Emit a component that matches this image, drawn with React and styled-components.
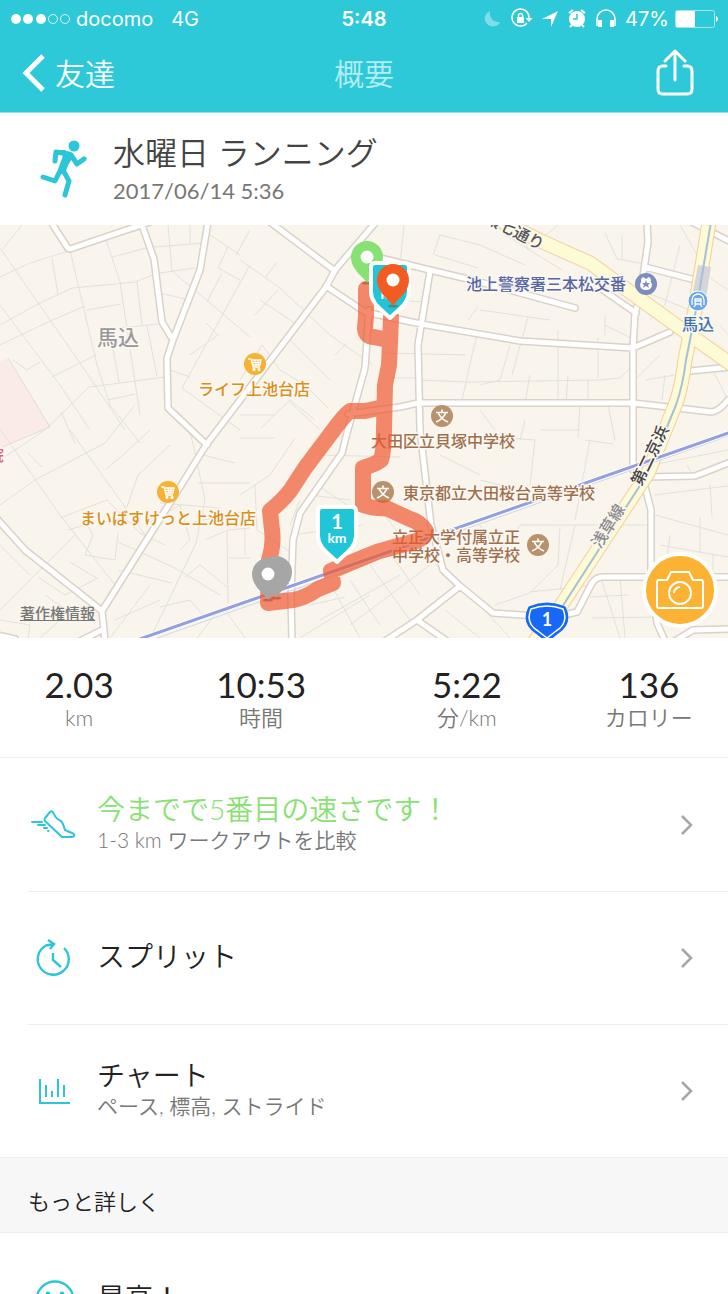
import styled, { createGlobalStyle } from 'styled-components';

const STATS = [
  { value: '2.03', unit: 'km' },
  { value: '10:53', unit: '時間' },
  { value: '5:22', unit: '分/km' },
  { value: '136', unit: 'カロリー' },
];

const SIDE_STREETS = [
  'M0 52L30 38L72 25L145 3M52 33L58 70M3 24L22 0M0 23L80 138L125 205M0 100L36 80L72 63L115 59L135 57L160 47M0 120L48 97L85 81M40 137L27 145L13 135M0 80L60 160L90 205',
  'M70 25L97 140L110 180L140 218M106 15L120 57L128 110L140 190M112 32L154 21M87 85L121 79M52 152L96 130M137 57L142 100M120 103L158 99M147 101L157 151M90 162L165 152M112 118L119 157M108 175L135 169M0 235L45 205L90 161M61 187L75 218',
  'M168 0L172 46L203 72L250 112M154 22L205 18M160 48L195 43M160 68L185 74M190 0V18M228 22L218 43L240 55M222 48L207 77M210 10L240 30M250 40L182 163L240 205M250 5L236 30M206 98L218 110L190 130M170 145L190 152',
  'M0 280L35 255L105 218L135 180M0 204L60 290L115 360M28 228L42 242M70 205L100 247L145 310M60 293L107 275L140 308L165 320M105 245L123 230L150 205M68 305L85 300M85 295L93 310L85 330L115 335L118 308M118 317L175 343L220 370',
  'M0 320L30 350M0 385L75 310M38 352L65 370L98 353M98 354L70 337M45 370L62 382M0 395L30 400L28 413M160 278L220 283M118 345L172 358M127 282L138 250L170 220M145 300L180 280L190 315L180 325',
  'M190 205L205 275L196 318L152 410M198 258H250M203 230L235 238M180 300L250 285M205 315L228 305L250 303M227 305L228 378M245 300V330M229 333H250M160 382L190 375L205 392M185 352L200 340L227 362',
  'M240 35L280 63L330 110L373 140M265 53L277 37M278 65L255 90M260 75L298 100M290 115L330 155M335 130L347 118M240 155L262 120L280 145L305 160L328 183M261 203L290 175L315 195M240 190L275 190M290 177L320 205',
  'M404 0L400 40M435 30L478 43M390 153H420M420 155L466 157L600 155L620 153L633 140M385 128L466 130M477 110L472 130L462 175M433 30L440 10L480 20M395 75L425 77M468 95L478 82M528 92L512 150M558 105V175M598 112V153',
  'M505 10L562 45M520 0L528 25L558 0M605 8L617 34L650 40M622 35V10M680 20L665 80L650 95M640 65L690 85M680 0L710 53L728 65M480 85L550 95M605 100L635 115M605 90V110M530 150L525 178M568 150L566 178M588 155V178',
  'M480 20L525 40M510 120L500 155L480 160M480 185L495 205M525 195L520 215M580 180L578 213M585 215L613 219M608 180L615 215M660 130L635 155M665 150L662 175M645 155L675 150M710 140L728 175M720 100L728 110',
  'M510 213L535 215L530 260M590 215L575 295M480 255L500 260M540 205L580 205M440 230L480 250M392 260L375 285M640 262L652 240L728 225M654 270L728 261M710 260L712 292M655 290L728 310M700 292V328M687 240L695 255',
  'M480 300L500 330L520 300L560 300H650M560 302L558 340L530 368L495 380M530 367L595 360M575 300L560 365M600 350L620 413M620 352L625 413M590 372L628 370M660 320L728 332M655 340L728 350M592 393L660 392M670 310L665 350M713 330V360',
  'M275 213H240M295 213L270 250L240 270M255 260L257 305L295 330M318 230L400 232M310 270L350 275M300 275L290 300M292 310L363 300M317 260L355 285M380 285L400 310M333 363L360 413M350 355L380 400M370 340L410 395M390 328L420 370M420 320L445 350',
  'M310 380L345 372M320 395L400 350M300 413L370 370M350 400L430 340M445 385L480 413M480 380L510 413M225 385L245 413M197 413L215 390L250 378M40 413L60 395M115 395L160 375M610 290L590 350M110 413L150 360',
];

const ROADS = [
  'M51 -3L67 22Q69 25 73 23L150 -3',
  'M142 0L154 34L162 97L173 115',
  'M208 -3L200 45L173 115L167 133L168 183L207 220',
  'M376 -3L335 45L326 62L206 220L180 262L102 386L105 416',
  'M-3 294L25 325L102 386M104 404L80 416M-3 410L15 414',
  'M270 -3L335 46',
  'M326 61L365 87L421 99L520 116L633 123L670 107',
  'M380 33L430 45L480 57L575 83',
  'M430 46L418 120L420 205L431 300L443 345L460 361L493 388L535 391',
  'M369 85L365 143L347 208L342 228L300 288L293 315L291 372L292 416',
  'M348 189L400 182L418 178H633L712 187Q719 186 728 175',
  'M647 -3L648 17L640 72L635 88L633 123V245',
  'M645 42L695 55M603 65L636 88',
  'M690 146L731 142M688 -5L731 17',
  'M460 361L417 395L385 416M417 395L447 416',
  'M645 252L695 251L731 237M644 258L651 285V352L657 398L665 416',
  'M555 392L577 387L592 358Q596 352 603 352H731M675 416L693 405L731 404',
];

const HIGHWAYS = [
  'M493 -8L543 17L590 38L680 103L731 139',
  'M709 -3L695 85L685 135Q682 160 676 178L648 248L558 385L535 416',
];

const ROUTE =
  'M366 64L366 90L365 104Q366 112 374 112L388 115M391 92L390 118L389 140L385 160L384 205Q384 226 381 235Q376 239 363 243L363 280Q375 284 386 283L410 294Q420 297 426 306Q424 313 416 316L387 324Q377 326 367 331L331 346L333 358L318 364Q305 373 293 375L268 378L269 335Q274 320 272 305L270 286Q282 276 290 266L305 243L335 203Q343 192 350 186L365 186L384 182';

const Pin = ({ x, y, color }) => (
  <g transform={`translate(${x} ${y})`}>
    <ellipse cx="0" cy="26" rx="5" ry="1.5" fill="#8a3018" opacity="0.4" />
    <path d="M0 26C-3 20 -16 13 -16 0A16 16 0 0 1 16 0C16 13 3 20 0 26Z" fill={color} />
    <circle r="6.5" fill="#fff" />
  </g>
);

const KmTag = ({ x, y, label }) => (
  <g transform={`translate(${x} ${y})`}>
    <path
      d="M-15 -28H15Q19 -28 19 -24V1C19 12 9 18 0 27C-9 18 -19 12 -19 1V-24Q-19 -28 -15 -28Z"
      fill="#20c6d8"
      stroke="#fff"
      strokeWidth="4"
      strokeLinejoin="round"
    />
    <TagText y="-6" $size={20}>{label}</TagText>
    <TagText y="8" $size={14}>km</TagText>
  </g>
);

const CartPoi = ({ x, y }) => (
  <g transform={`translate(${x} ${y})`} fill="none" stroke="#fff" strokeWidth="1.3">
    <circle r="11" fill="#f7b133" stroke="none" />
    <path d="M-7 -5H-4L-2 3H5M-4 -4H6L5 1H-2.5M-3 -1.5H6M0 -4L1 1M3 -4V1" />
    <circle cx="-1" cy="5.5" r="1" fill="#fff" />
    <circle cx="4" cy="5.5" r="1" fill="#fff" />
  </g>
);

const SchoolPoi = ({ x, y }) => (
  <g transform={`translate(${x} ${y})`}>
    <circle r="11" fill="#b8916d" />
    <path d="M0 -6.5V-3.5M-6 -3.5H6M-4 -3.5C-2 1 1 4 6 6M4 -3.5C2 1 -1 4 -6 6" fill="none" stroke="#fff" strokeWidth="1.6" />
  </g>
);

const RouteMap = () => (
  <MapSvg viewBox="0 0 728 413" role="img" aria-label="ルート">
    <rect width="728" height="413" fill="#f9f5ed" />
    <path d="M0 137L8 133L50 202L0 223Z" fill="#fbebe7" />
    <path d="M8 133L50 202L0 223" fill="none" stroke="#e3dcd4" />
    <path d={SIDE_STREETS.join('')} fill="none" stroke="#e3e1da" strokeWidth="1" />

    <g fill="none" strokeLinejoin="round" strokeLinecap="round">
      <path d={ROADS.join('')} stroke="#dad2c8" strokeWidth="8" />
      <path d={ROADS.join('')} stroke="#fff" strokeWidth="5" />
      <path d={HIGHWAYS.join('')} stroke="#f3cf9a" strokeWidth="15" />
      <path d={HIGHWAYS.join('')} stroke="#fdfad6" strokeWidth="13" />
      <path d="M698 40L711 42L704 85L690 83Z" fill="#d6d6d8" />
      <path d="M711 -3L697 80L686 135Q683 160 676 180L648 248L555 393" stroke="#a5c0d8" strokeWidth="2" />
      <path d="M143 418L731 210" stroke="#ccd8ea" strokeWidth="1" />
      <path d="M140 414L731 207" stroke="#fff" strokeWidth="5" />
      <path d="M140 414L731 207" stroke="#949fdd" strokeWidth="3" />
    </g>

    <CartPoi x={255} y={139} />
    <CartPoi x={168} y={267} />
    <SchoolPoi x={442} y={191} />
    <SchoolPoi x={383} y={267} />
    <SchoolPoi x={538} y={320} />
    <circle cx="646" cy="59" r="11" fill="#7d8dbd" />
    <path d="M641 54L643 52L646 54L649 52L651 54Q650 57 652 59Q652 65 646 65Q640 65 640 59Q642 57 641 54Z" fill="#fff" />
    <path d="M646 55L647 58H650L648 60L649 63L646 61L643 63L644 60L642 58H645Z" fill="#7d8dbd" />
    <circle cx="698" cy="76" r="10" fill="#6aa6e8" stroke="#fff" />
    <path d="M692 80V75A6 6 0 0 1 704 75V80M695 74V79H701V74ZM695 76H701M696 79L694 82M700 79L702 82" fill="none" stroke="#fff" strokeWidth="1.3" />

    <Label x="546" y="65" $color="#5566a5">池上警察署三本松交番</Label>
    <Label x="698" y="105" $color="#4272ad">馬込</Label>
    <Label x="118" y="120" $color="#999" $size={21}>馬込</Label>
    <Label x="254" y="170" $color="#d98f18">ライフ上池台店</Label>
    <Label x="168" y="299" $color="#d98f18">まいばすけっと上池台店</Label>
    <Label x="443" y="222" $color="#9f704d">大田区立貝塚中学校</Label>
    <Label x="499" y="274" $color="#9f704d">東京都立大田桜台高等学校</Label>
    <Label x="456" y="318" $color="#9f704d">立正大学付属立正</Label>
    <Label x="456" y="336" $color="#9f704d">中学校・高等学校</Label>
    <Label x="-4" y="236" $color="#e2626b">院</Label>
    <Label $color="#555" transform="translate(512 11) rotate(27)">環七通り</Label>
    <Label $color="#444" transform="translate(655 233) rotate(-64)">第二京浜</Label>
    <Label $color="#8d8d8d" transform="translate(613 304) rotate(-58)">浅草線</Label>

    <path d={ROUTE} fill="none" stroke="#ef5a30" strokeOpacity="0.7" strokeWidth="16" strokeLinejoin="round" strokeLinecap="round" />

    <Pin x={367} y={32} color="#87e173" />
    <KmTag x={390} y={66} label="2" />
    <Pin x={393} y={55} color="#f25b22" />
    <KmTag x={337} y={310} label="1" />
    <Pin x={276} y={347} color="#a6a6a6" />
    <Pin x={268} y={349} color="#a6a6a6" />

    <path d="M530 383Q547 376 564 383Q571 398 557 407L547 415L537 407Q523 398 530 383Z" fill="#1668f5" stroke="#1668f5" strokeWidth="4" strokeLinejoin="round" />
    <path d="M531 384Q547 378 563 384Q569 398 556 406L547 413L538 406Q525 398 531 384Z" fill="none" stroke="#fff" strokeWidth="1.5" />
    <TagText x="547" y="401" $size={18}>1</TagText>
  </MapSvg>
);

export default function App() {
  return (
    <Page>
      <GlobalStyle />
      <Header>
        <StatusBar>
          <StatusGroup>
            <svg width="60" height="12" viewBox="0 0 60 12" fill="#fff">
              <circle cx="6" cy="6" r="5" />
              <circle cx="18" cy="6" r="5" />
              <circle cx="31" cy="6" r="5" />
              <circle cx="43" cy="6" r="4.5" fill="none" stroke="#fff" strokeWidth="0.8" />
              <circle cx="55" cy="6" r="4.5" fill="none" stroke="#fff" strokeWidth="0.8" />
            </svg>
            <span>docomo</span>
            <Network>4G</Network>
          </StatusGroup>
          <Clock>5:48</Clock>
          <StatusGroup $end>
            <svg width="136" height="22" viewBox="0 0 136 22" fill="none" stroke="#fff" strokeWidth="1.5">
              <path d="M7 3A8 8 0 1 0 17 14A9 9 0 0 1 7 3Z" fill="#7edee8" stroke="none" />
              <path d="M44 15A8.5 8.5 0 1 1 46 10" />
              <path d="M42.5 10H49.5L46 14Z" fill="#fff" stroke="none" />
              <rect x="34" y="9" width="7" height="6" fill="#fff" stroke="none" />
              <path d="M35.5 9V7.5A2 2 0 0 1 39.5 7.5V9" />
              <path d="M59 11L75 3L68 19V11Z" fill="#fff" stroke="none" />
              <circle cx="94" cy="11" r="8" fill="#fff" stroke="none" />
              <path d="M94 6V11H90" stroke="#2dc9d9" />
              <path d="M86 5L90 2M102 5L98 2M89 17L87 19M99 17L101 19" strokeWidth="2" />
              <path d="M114 18V11A9 9 0 0 1 132 11V18" />
              <path d="M117 12V19M129 12V19" strokeWidth="4" />
            </svg>
            <span>47%</span>
            <svg width="43" height="18" viewBox="0 0 43 18">
              <rect x="0.5" y="0.5" width="39" height="17" rx="2" fill="none" stroke="#a5e7ef" />
              <rect x="1" y="1" width="19" height="16" rx="1" fill="#fff" />
              <path d="M41 6Q43 7 43 9Q43 11 41 12Z" fill="#fff" />
            </svg>
          </StatusGroup>
        </StatusBar>
        <NavBar>
          <BackButton type="button">
            <svg width="24" height="38" viewBox="0 0 24 38" fill="none" stroke="#fff" strokeWidth="5">
              <path d="M21 2L4 19L21 36" />
            </svg>
            友達
          </BackButton>
          <NavTitle>概要</NavTitle>
          <ShareButton type="button" aria-label="共有">
            <svg width="38" height="48" viewBox="0 0 38 48" fill="none" stroke="#fff" strokeWidth="3" strokeLinecap="round" strokeLinejoin="round">
              <path d="M10 17H7Q2 17 2 22V40Q2 45 7 45H31Q36 45 36 40V22Q36 17 31 17H28M19 31V2M9 12L19 2L29 12" />
            </svg>
          </ShareButton>
        </NavBar>
      </Header>

      <Summary>
        <svg width="48" height="60" viewBox="0 0 48 60" fill="none" stroke="#2cc6d8" strokeWidth="5" strokeLinecap="round" strokeLinejoin="round">
          <circle cx="34" cy="7" r="5.5" fill="#2cc6d8" stroke="none" />
          <path d="M15 22L16 13L29 15M31 16L37 25L44 20" />
          <path d="M16 11H25L34 17L24 32L19 29L23 17Z" fill="#2cc6d8" stroke="none" />
          <path d="M27 18L22 31" strokeWidth="8" />
          <path d="M23 31L29 42L25 56M20 32L15 42L3 38" />
        </svg>
        <div>
          <WorkoutName>水曜日 ランニング</WorkoutName>
          <WorkoutDate>2017/06/14 5:36</WorkoutDate>
        </div>
      </Summary>

      <MapArea>
        <RouteMap />
        <Copyright href="#legal">著作権情報</Copyright>
        <CameraButton type="button" aria-label="写真を追加">
          <svg width="48" height="40" viewBox="0 0 48 40" fill="none" stroke="#fff" strokeWidth="2" strokeLinejoin="round">
            <path d="M3 10H11L15 2H33L37 10H45Q47 10 47 12V36Q47 38 45 38H3Q1 38 1 36V12Q1 10 3 10Z" />
            <circle cx="24" cy="23" r="11" />
            <path d="M18 23A6 6 0 0 1 24 17" />
          </svg>
        </CameraButton>
      </MapArea>

      <Stats>
        {STATS.map((s) => (
          <Stat key={s.unit}>
            <StatValue>{s.value}</StatValue>
            <StatUnit>{s.unit}</StatUnit>
          </Stat>
        ))}
      </Stats>

      <Row type="button">
        <svg width="50" height="40" viewBox="0 0 50 40" fill="none" stroke="#2cc6d8" strokeWidth="2" strokeLinejoin="round" strokeLinecap="round">
          <path d="M17 13L22 7Q24 5 26 9Q28 14 33 16Q35 18 37 25L44 28Q47 29 46 31Q45 32 43 32H34L17 16Q16 15 17 13Z" />
          <path d="M4 17H14M10 20H17M16 23H19M20 26H20.5" />
        </svg>
        <RowText>
          <RowTitle $accent>今までで5番目の速さです！</RowTitle>
          <RowSub>1-3 km ワークアウトを比較</RowSub>
        </RowText>
        <Chevron />
      </Row>
      <Row type="button">
        <svg width="50" height="40" viewBox="0 0 50 40" fill="none" stroke="#2cc6d8" strokeWidth="2.4">
          <path d="M36 10A15.500 15.500 0 1 1 18 7.500L26 6M20 2L26 6L22 11M25 15V22L33 29" />
        </svg>
        <RowText>
          <RowTitle>スプリット</RowTitle>
        </RowText>
        <Chevron />
      </Row>
      <Row type="button">
        <svg width="50" height="40" viewBox="0 0 50 40" fill="none" stroke="#2cc6d8" strokeWidth="2">
          <path d="M12 8V32H42M18 14V26M24 20V26M30 8V26M36 14V26" />
        </svg>
        <RowText>
          <RowTitle>チャート</RowTitle>
          <RowSub>ペース, 標高, ストライド</RowSub>
        </RowText>
        <Chevron />
      </Row>

      <SectionHeading>もっと詳しく</SectionHeading>

      <Row type="button">
        <svg width="50" height="40" viewBox="0 0 50 40" fill="none" stroke="#2cc6d8" strokeWidth="2.4">
          <circle cx="27" cy="20" r="18.500" />
          <circle cx="20" cy="14" r="2.400" fill="#2cc6d8" stroke="none" />
          <circle cx="34" cy="14" r="2.400" fill="#2cc6d8" stroke="none" />
          <path d="M17 24Q27 36 37 24" />
        </svg>
        <RowText>
          <RowTitle>最高！</RowTitle>
        </RowText>
      </Row>
    </Page>
  );
}

const Chevron = () => (
  <svg width="14" height="22" viewBox="0 0 14 22" fill="none" stroke="#a6a6a6" strokeWidth="2.5">
    <path d="M2 2L11 11L2 20" />
  </svg>
);

const GlobalStyle = createGlobalStyle`
  * {
    box-sizing: border-box;
  }

  body {
    margin: 0;
    background: #fff;
    font-family: Lato, "Noto Sans CJK JP", sans-serif;
    color: #222;
  }

  button {
    font-family: inherit;
    color: inherit;
    background: none;
    border: none;
    padding: 0;
    cursor: pointer;
  }

  svg {
    display: block;
    flex-shrink: 0;
  }
`;

const Page = styled.div`
  height: 100vh;
  overflow-y: auto;
  scrollbar-width: none;
`;

const Header = styled.header`
  background: #2dc9d9;
  color: #fff;
  border-bottom: 1px solid #8adfe8;
`;

const StatusBar = styled.div`
  display: grid;
  grid-template-columns: 1fr auto 1fr;
  align-items: center;
  height: 37px;
  padding: 0 10px;
  font-family: Inter, sans-serif;
  font-size: 20px;
  line-height: 24px;
`;

const StatusGroup = styled.div`
  display: flex;
  align-items: center;
  gap: 6px;
  justify-content: ${(p) => (p.$end ? 'flex-end' : 'flex-start')};
`;

const Network = styled.span`
  margin-left: 12px;
`;

const Clock = styled.span`
  font-weight: 600;
`;

const NavBar = styled.nav`
  display: grid;
  grid-template-columns: 1fr auto 1fr;
  align-items: center;
  height: 75px;
  padding: 0 22px 4px;
`;

const BackButton = styled.button`
  display: flex;
  align-items: center;
  justify-self: start;
  gap: 9px;
  font-size: 30px;
  font-weight: 350;
  line-height: 40px;

  && {
    color: #fff;
  }
`;

const NavTitle = styled.h1`
  margin: 0;
  font-size: 30px;
  font-weight: 350;
  line-height: 40px;
  color: #b5edf2;
`;

const ShareButton = styled.button`
  justify-self: end;
  margin-right: 12px;
`;

const Summary = styled.section`
  display: flex;
  align-items: center;
  gap: 25px;
  height: 112px;
  padding: 0 40px;
`;

const WorkoutName = styled.h2`
  margin: 0;
  font-size: 32px;
  font-weight: 350;
  line-height: 44px;
  color: #444;
`;

const WorkoutDate = styled.p`
  margin: 0;
  font-size: 22px;
  line-height: 32px;
  color: #777;
`;

const MapArea = styled.section`
  position: relative;
`;

const MapSvg = styled.svg`
  width: 100%;
  height: auto;
`;

const Label = styled.text`
  font-family: "Noto Sans CJK JP", sans-serif;
  font-size: ${(p) => p.$size || 16}px;
  font-weight: 500;
  text-anchor: middle;
  fill: ${(p) => p.$color};
  stroke: #fbf8f2;
  stroke-width: 3px;
  stroke-linejoin: round;
  paint-order: stroke;
`;

const TagText = styled.text`
  font-family: Lato, sans-serif;
  font-size: ${(p) => p.$size}px;
  font-weight: 700;
  text-anchor: middle;
  fill: #fff;
`;

const Copyright = styled.a`
  position: absolute;
  left: 20px;
  bottom: 15px;
  font-size: 15px;
  font-weight: 500;
  line-height: 20px;
  color: #777;
`;

const CameraButton = styled.button`
  position: absolute;
  right: 10px;
  bottom: 10px;
  display: flex;
  align-items: center;
  justify-content: center;
  width: 76px;
  height: 76px;
  border-radius: 50%;

  && {
    background: #fcb232;
    border: 4px solid #fff;
  }
`;

const Stats = styled.section`
  display: grid;
  grid-template-columns: 10fr 13fr 13fr 10fr;
  align-items: center;
  height: 120px;
  border-bottom: 1px solid #f0f0f0;
`;

const Stat = styled.div`
  text-align: center;
`;

const StatValue = styled.div`
  font-size: 35px;
  line-height: 40px;
`;

const StatUnit = styled.div`
  font-size: 22px;
  font-weight: 350;
  line-height: 28px;
  color: #777;
`;

const Row = styled.button`
  display: flex;
  align-items: center;
  gap: 19px;
  width: calc(100% - 28px);
  height: 133px;
  margin-left: 28px;
  text-align: left;

  && {
    padding-right: 34px;
  }

  & + & {
    border-top: 1px solid #eee;
  }
`;

const RowText = styled.div`
  flex: 1;
  padding-bottom: 4px;
`;

const RowTitle = styled.div`
  font-size: 28px;
  font-weight: 350;
  line-height: 34px;
  color: ${(p) => (p.$accent ? '#87e173' : '#222')};
`;

const RowSub = styled.div`
  font-size: 21px;
  font-weight: 350;
  line-height: 28px;
  color: #777;
`;

const SectionHeading = styled.h3`
  margin: 0;
  padding: 28px 28px 14px;
  background: #f7f7f7;
  border-top: 1px solid #eee;
  border-bottom: 1px solid #eee;
  font-size: 22px;
  font-weight: 350;
  line-height: 32px;
`;
